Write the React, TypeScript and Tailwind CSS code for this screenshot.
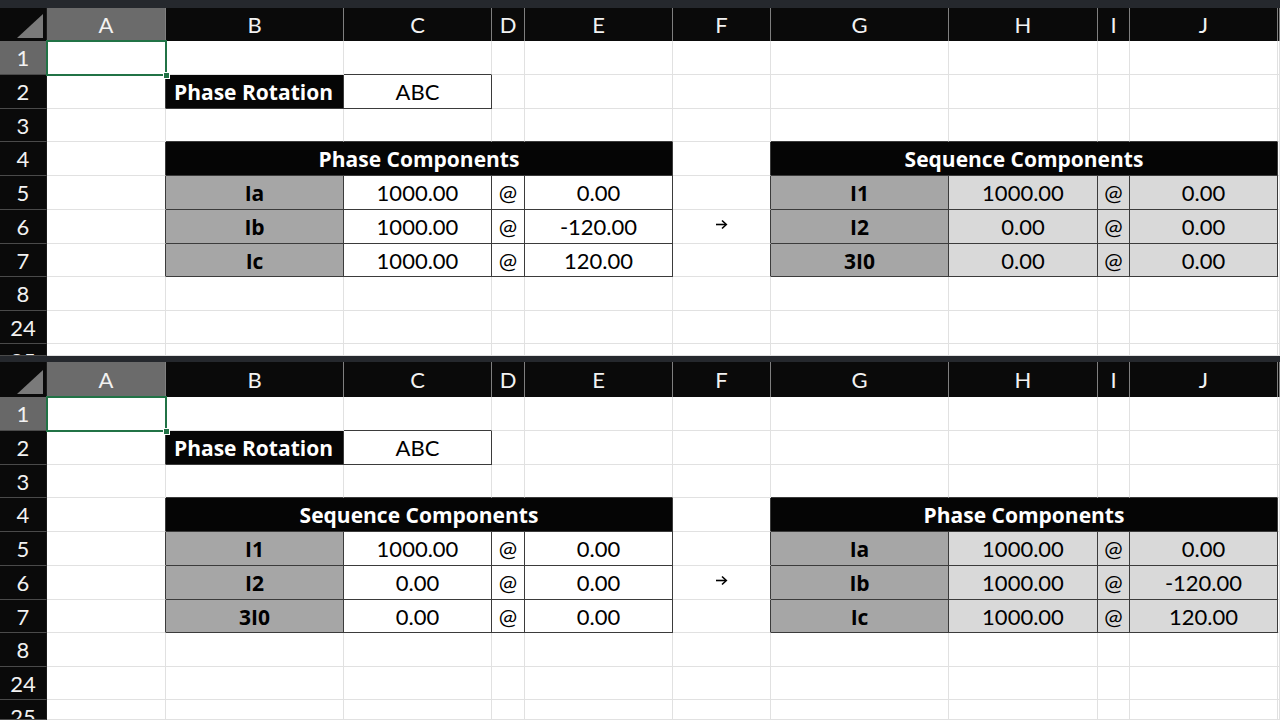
import React from "react";

const COLS =
  "grid grid-cols-[47px_119px_178px_148px_33px_148px_98px_178px_149px_32px_148px_1fr]";

const BORDER_R = { g: "border-r-[#e1e1e1]", d: "border-r-[#3b3b3b]" };
const BORDER_B = { g: "border-b-[#e1e1e1]", d: "border-b-[#3b3b3b]" };
const BG = {
  w: "bg-white",
  k: "bg-[#050505]",
  g: "bg-[#a6a6a6]",
  l: "bg-[#d9d9d9]",
};
const SPAN = { 1: "", 4: "col-span-4" };
const KIND = {
  none: "",
  label: "justify-center pt-[3px] font-['Open_Sans',sans-serif] font-bold text-black text-[21px]",
  value: "justify-center text-black text-[22px]",
  title: "justify-center pt-[3px] font-['Open_Sans',sans-serif] font-bold text-white text-[21px]",
  rot: "justify-start pl-2 pt-[3px] font-['Open_Sans',sans-serif] font-bold text-white text-[21px]",
};
const HEIGHT: Record<number, string> = {
  34: "h-[34px]",
  33: "h-[33px]",
  12: "h-[12px]",
  20: "h-[20px]",
};

type CellSpec = {
  bg?: keyof typeof BG;
  r?: "g" | "d";
  b?: "g" | "d";
  span?: 1 | 4;
  kind?: keyof typeof KIND;
  text?: React.ReactNode;
};

function Cell({ bg = "w", r = "g", b = "g", span = 1, kind = "none", text }: CellSpec) {
  return (
    <div
      className={`flex items-center overflow-hidden whitespace-nowrap border-r border-b ${BG[bg]} ${BORDER_R[r]} ${BORDER_B[b]} ${SPAN[span]} ${KIND[kind]}`}
    >
      {text}
    </div>
  );
}

function Arrow() {
  return (
    <svg width="13" height="11" viewBox="0 0 13 11" className="mx-auto mb-[5px]">
      <path d="M1 5.5 H11" stroke="#000" strokeWidth="1.6" fill="none" />
      <path d="M7 1.5 L11.3 5.5 L7 9.5" stroke="#000" strokeWidth="1.6" fill="none" />
    </svg>
  );
}

type Table = { title: string; rows: [string, string, string][] };

const PHASE: Table = {
  title: "Phase Components",
  rows: [
    ["Ia", "1000.00", "0.00"],
    ["Ib", "1000.00", "-120.00"],
    ["Ic", "1000.00", "120.00"],
  ],
};
const SEQ: Table = {
  title: "Sequence Components",
  rows: [
    ["I1", "1000.00", "0.00"],
    ["I2", "0.00", "0.00"],
    ["3I0", "0.00", "0.00"],
  ],
};

function plain(n: number): CellSpec[] {
  return Array.from({ length: n }, () => ({}));
}

function buildRows(left: Table, right: Table): CellSpec[][] {
  const rows: CellSpec[][] = [];
  rows.push([{}, {}, { b: "d" }, ...plain(8)]);
  rows.push([
    { r: "d" },
    { bg: "k", r: "d", b: "d", kind: "rot", text: "Phase Rotation" },
    { r: "d", b: "d", kind: "value", text: "ABC" },
    ...plain(8),
  ]);
  rows.push([
    {},
    { b: "d" },
    { b: "d" },
    { b: "d" },
    { b: "d" },
    {},
    { b: "d" },
    { b: "d" },
    { b: "d" },
    { b: "d" },
    {},
  ]);
  rows.push([
    { r: "d" },
    { span: 4, bg: "k", r: "d", b: "d", kind: "title", text: left.title },
    { r: "d" },
    { span: 4, bg: "k", r: "d", b: "d", kind: "title", text: right.title },
    {},
  ]);
  for (let i = 0; i < 3; i++) {
    const L = left.rows[i];
    const R = right.rows[i];
    rows.push([
      { r: "d" },
      { bg: "g", r: "d", b: "d", kind: "label", text: L[0] },
      { r: "d", b: "d", kind: "value", text: L[1] },
      { r: "d", b: "d", kind: "value", text: "@" },
      { r: "d", b: "d", kind: "value", text: L[2] },
      { r: "d", text: i === 1 ? <Arrow /> : undefined },
      { bg: "g", r: "d", b: "d", kind: "label", text: R[0] },
      { bg: "l", r: "d", b: "d", kind: "value", text: R[1] },
      { bg: "l", r: "d", b: "d", kind: "value", text: "@" },
      { bg: "l", r: "d", b: "d", kind: "value", text: R[2] },
      {},
    ]);
  }
  rows.push(plain(11));
  rows.push(plain(11));
  rows.push(plain(11));
  return rows;
}

const LETTERS = ["A", "B", "C", "D", "E", "F", "G", "H", "I", "J", ""];
const NUMS = ["1", "2", "3", "4", "5", "6", "7", "8", "24", "25"];

function Sheet({
  first,
  left,
  right,
}: {
  first: boolean;
  left: Table;
  right: Table;
}) {
  const heights = first
    ? [34, 34, 33, 34, 34, 34, 33, 34, 33, 12]
    : [34, 34, 33, 34, 34, 34, 33, 34, 33, 20];
  const rows = buildRows(left, right);
  return (
    <div className="relative overflow-hidden">
      <div className={first ? "h-[8px] bg-[#25282d]" : "h-[6px] bg-[#25282d]"} />
      <div className={`${COLS} ${first ? "h-[33px]" : "h-[35px]"}`}>
        <div className="relative bg-[#0a0a0a] border-r border-r-[#1a1a1a]">
          <svg
            width="26"
            height="24"
            viewBox="0 0 26 24"
            className="absolute right-[3px] bottom-[3px]"
          >
            <polygon points="0,24 26,24 26,0" fill="#7a7a7a" />
          </svg>
        </div>
        {LETTERS.map((l, i) => (
          <div
            key={i}
            className={`flex items-center justify-center text-[22px] text-[#f2f2f2] border-r border-r-[#7f7f7f] ${
              i === 0 ? "bg-[#6b6b6b]" : "bg-[#0a0a0a]"
            }`}
          >
            {l}
          </div>
        ))}
      </div>
      {rows.map((cells, ri) => (
        <div key={ri} className={`${COLS} ${HEIGHT[heights[ri]]}`}>
          <div
            className={`overflow-hidden border-r border-r-[#1a1a1a] border-b border-b-[#4a4a4a] ${
              ri === 0 ? "bg-[#686868]" : "bg-[#0a0a0a]"
            }`}
          >
            <div className="h-[33px] flex items-center justify-center text-[22px] text-[#f2f2f2]">
              {NUMS[ri]}
            </div>
          </div>
          {cells.map((c, ci) => (
            <Cell key={ci} {...c} />
          ))}
        </div>
      ))}
      <div className="absolute left-[46px] top-[40px] w-[121px] h-[36px] border-2 border-[#217346] pointer-events-none">
        <div className="absolute right-[-5px] bottom-[-5px] w-[7px] h-[7px] bg-[#217346] border border-white" />
      </div>
    </div>
  );
}

export default function App() {
  return (
    <div className="w-[1280px] h-[720px] overflow-hidden bg-white font-['Lato','Open_Sans',sans-serif]">
      <Sheet first left={PHASE} right={SEQ} />
      <Sheet first={false} left={SEQ} right={PHASE} />
    </div>
  );
}
